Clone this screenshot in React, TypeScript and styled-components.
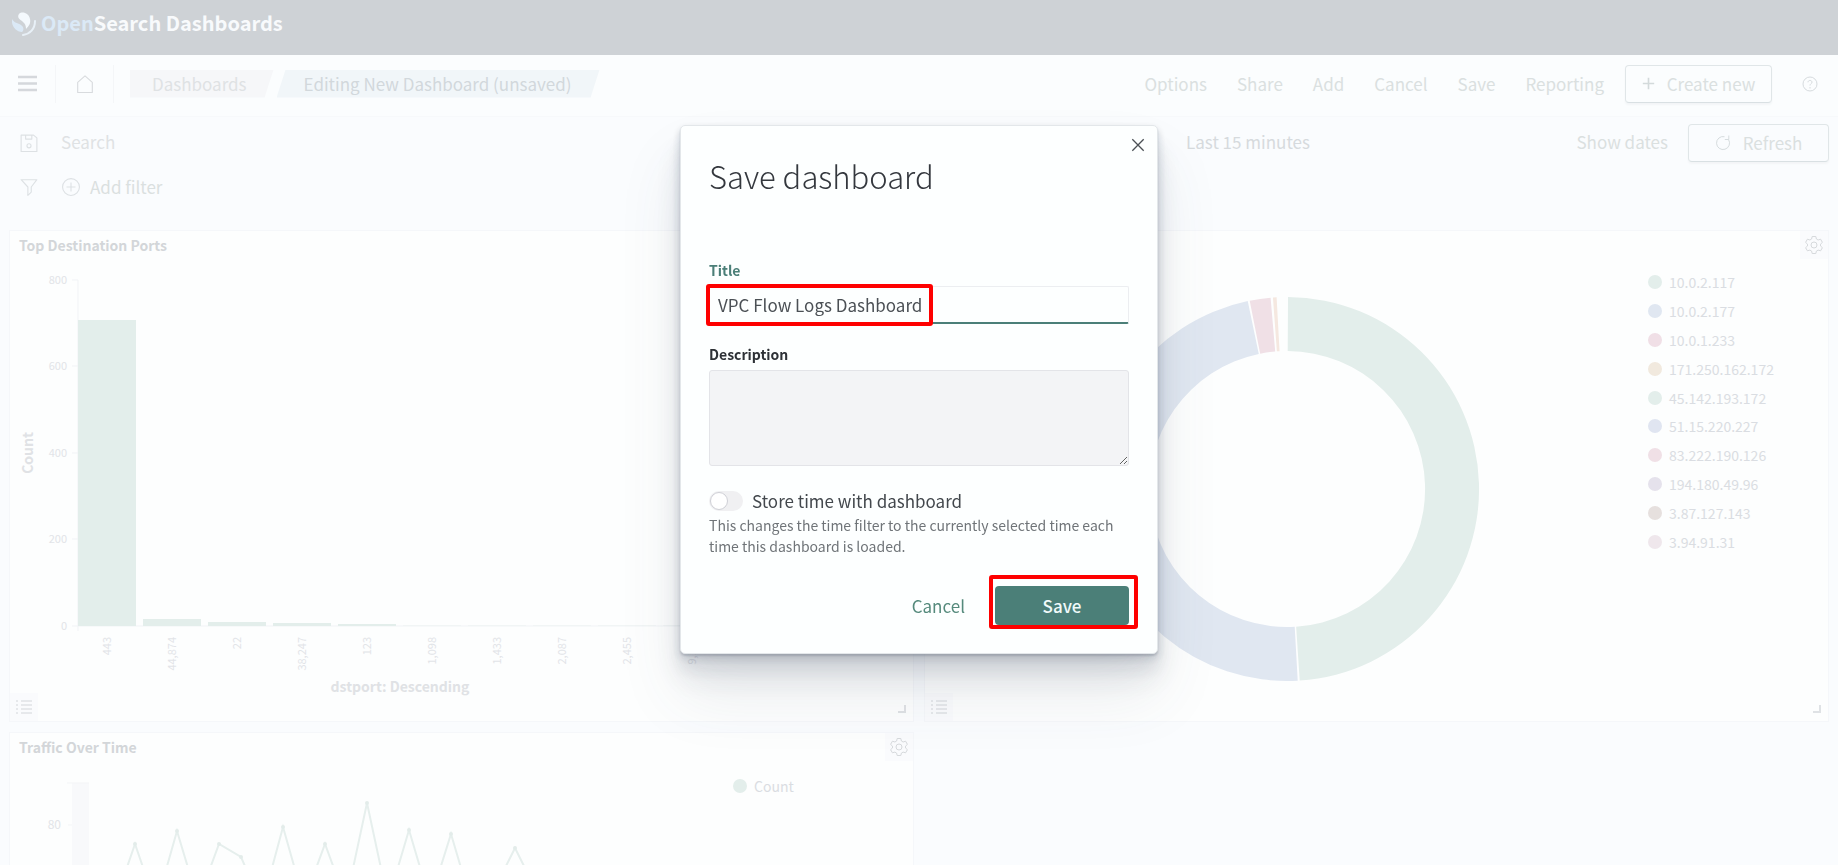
import React, { useState } from "react";
import styled, { createGlobalStyle } from "styled-components";

const Global = createGlobalStyle`
  *, *::before, *::after { box-sizing: border-box; }
  body {
    margin: 0;
    background: #fafcfe;
    font-family: "Noto Sans CJK SC", "Open Sans", sans-serif;
    font-size: 17px;
    line-height: 24px;
    color: #d3d6d9;
  }
  button, input, textarea { font: inherit; color: inherit; }
  button { background: none; border: 0; padding: 0; cursor: pointer; }
`;

const Page = styled.div`
  height: 100vh;
  overflow: hidden;
  display: flex;
  flex-direction: column;
`;

const Header = styled.header`
  flex: none;
  height: 55px;
  padding: 10px 12px;
  background: #ced2d6;
`;
const Brand = styled.a`
  display: inline-flex;
  align-items: center;
  gap: 5px;
  height: 26px;
  color: #f8fafc;
  font-size: 20px;
  font-weight: 700;
  text-decoration: none;
`;
const BrandAccent = styled.span`
  color: #dbe9f6;
`;

const NavBar = styled.nav`
  flex: none;
  display: flex;
  align-items: center;
  height: 62px;
  padding: 0 20px 4px 0;
  border-bottom: 1px solid #f7f9fb;
  background: #fbfdfe;
`;
const NavIcon = styled.button<{ $width: number }>`
  display: flex;
  align-items: center;
  justify-content: center;
  width: ${(p) => p.$width}px;
  height: 38px;
  border-right: 1px solid #f4f6f8;
`;
const Crumbs = styled.ol`
  display: flex;
  gap: 3px;
  margin: 0 auto 0 16px;
  padding: 0;
  list-style: none;
`;
const Crumb = styled.li<{ $current?: boolean }>`
  height: 28px;
  padding: 0 ${(p) => (p.$current ? 28 : 27)}px 0 ${(p) => (p.$current ? 27 : 22)}px;
  line-height: 28px;
  color: ${(p) => (p.$current ? "#d2d8dc" : "#dfe2e4")};
  background: ${(p) => (p.$current ? "#f1f6f9" : "#f6f7f9")};
  clip-path: ${(p) =>
    p.$current
      ? "polygon(9px 0, 100% 0, calc(100% - 9px) 100%, 0 100%)"
      : "polygon(0 0, 100% 0, calc(100% - 9px) 100%, 0 100%)"};
  a { color: inherit; text-decoration: none; }
`;
const Links = styled.div`
  display: flex;
  align-items: center;
  gap: 30px;
  margin-right: 21px;
`;
const TextButton = styled.button`
  color: #dae0e0;
`;
const OutlineButton = styled.button<{ $width: number }>`
  display: flex;
  align-items: center;
  justify-content: center;
  gap: 12px;
  width: ${(p) => p.$width}px;
  height: 38px;
  border: 1px solid #e0e6e8;
  border-bottom-color: #d9e0e3;
  border-radius: 4px;
  color: #dae0e0;
  box-shadow: 0 2px 2px #f3f5f7;
`;
const HelpButton = styled.button`
  display: flex;
  margin-left: 30px;
`;

const QueryBar = styled.div`
  flex: none;
  display: flex;
  align-items: center;
  height: 52px;
  padding: 0 9px 0 20px;
`;
const Search = styled.input`
  flex: 1;
  min-width: 0;
  height: 28px;
  margin-left: 23px;
  padding: 0 0 4px;
  border: 0;
  outline: 0;
  background: none;
  &::placeholder { color: #dfe2e4; opacity: 1; }
`;
const TimeRange = styled.div`
  display: flex;
  align-items: center;
  justify-content: space-between;
  width: 482px;
  height: 28px;
  margin-right: 20px;
  padding-bottom: 2px;
  color: #d6dadd;
`;

const FilterBar = styled.div`
  flex: none;
  display: flex;
  align-items: center;
  gap: 24px;
  height: 36px;
  margin-bottom: 25px;
  padding: 0 20px;
`;
const AddFilter = styled.button`
  display: flex;
  align-items: center;
  gap: 10px;
  color: #dae0e0;
`;

const Grid = styled.main`
  display: grid;
  grid-template-columns: 1fr 1fr;
  grid-auto-rows: 492px;
  gap: 10px;
  padding: 0 9px;
`;
const Panel = styled.section`
  position: relative;
  display: flex;
  flex-direction: column;
  min-width: 0;
  border: 1px solid #f5f7fa;
  background: #fdfefe;
`;
const PanelHead = styled.header`
  display: flex;
  justify-content: space-between;
  height: 32px;
  padding-left: 9px;
`;
const PanelTitle = styled.h2`
  margin: 0;
  color: #d3d6d9;
  font-size: 14px;
  font-weight: 700;
  line-height: 28px;
`;
const CornerButton = styled.button`
  display: flex;
  align-items: center;
  justify-content: center;
  width: 28px;
  height: 28px;
  background: #fafbfd;
`;
const LegendToggle = styled(CornerButton)`
  position: absolute;
  left: 0;
  bottom: 0;
`;
const ResizeGrip = styled.span`
  position: absolute;
  right: 7px;
  bottom: 8px;
  width: 8px;
  height: 8px;
  border: solid #dfe2e5;
  border-width: 0 2px 2px 0;
`;
const PanelBody = styled.div`
  display: flex;
  flex: 1;
  min-height: 0;
`;
const ChartArea = styled.div`
  flex: 1;
  min-width: 0;
`;
const DonutArea = styled.div`
  flex: 1;
  display: flex;
  justify-content: center;
  align-items: flex-start;
  min-width: 0;
  padding-top: 33px;
`;
const Legend = styled.ul<{ $height: number }>`
  flex: none;
  display: flex;
  flex-direction: column;
  width: 180px;
  height: ${(p) => p.$height}px;
  margin: 5px 0 0;
  padding: 0;
  list-style: none;
  font-size: 14px;
`;
const LegendItem = styled.li<{ $color: string }>`
  flex: 1;
  display: flex;
  align-items: center;
  gap: 7px;
  color: #dadde2;
  &::before {
    content: "";
    width: 14px;
    height: 14px;
    border-radius: 50%;
    background: ${(p) => p.$color};
  }
`;

const Overlay = styled.div`
  position: fixed;
  inset: 0;
  display: flex;
  align-items: center;
  justify-content: center;
  padding-bottom: 86px;
`;
const Dialog = styled.form`
  position: relative;
  width: 478px;
  padding: 29px 28px 28px;
  border: 1px solid #e3e7ea;
  border-radius: 5px;
  background: #fdffff;
  color: #4b5055;
  box-shadow:
    0 40px 64px rgba(65, 78, 101, 0.1),
    0 24px 32px rgba(65, 78, 101, 0.1),
    0 16px 16px rgba(65, 78, 101, 0.1),
    0 4px 8px rgba(65, 78, 101, 0.2),
    0 2px 2px rgba(65, 78, 101, 0.2);
`;
const CloseButton = styled.button`
  position: absolute;
  top: 12px;
  right: 12px;
  display: flex;
`;
const DialogTitle = styled.h1`
  margin: 0 0 63px;
  color: #34383e;
  font-size: 31px;
  font-weight: 300;
  line-height: 42px;
`;
const Label = styled.label<{ $focused?: boolean }>`
  display: block;
  color: ${(p) => (p.$focused ? "#4b7f78" : "#2d3136")};
  font-size: 14px;
  font-weight: 700;
  line-height: 20px;
`;
const TitleField = styled.div`
  position: relative;
  margin: 6px 0 20px;
`;
const TitleInput = styled.input`
  display: block;
  width: 100%;
  height: 38px;
  padding: 0 8px;
  border: 1px solid #eceef1;
  border-bottom: 2px solid #4b7f78;
  border-radius: 2px;
  outline: 0;
  background: #fdffff;
`;
const Highlight = styled.span<{ $box: string }>`
  position: absolute;
  inset: ${(p) => p.$box};
  border: 4px solid #fe0000;
  border-radius: 3px;
  pointer-events: none;
`;
const Description = styled.textarea`
  display: block;
  width: 100%;
  height: 96px;
  margin: 6px 0 21px;
  padding: 10px;
  border: 1px solid #e3e4e8;
  border-radius: 3px;
  background: #f3f4f6;
  resize: vertical;
`;
const SwitchRow = styled.label`
  display: flex;
  align-items: center;
  gap: 9px;
  height: 28px;
  color: #43484d;
`;
const Switch = styled.input`
  appearance: none;
  width: 34px;
  height: 20px;
  margin: 0;
  border-radius: 10px;
  background: #f0f0f2;
  &::before {
    content: "";
    display: block;
    width: 18px;
    height: 18px;
    margin: 1px;
    border: 1px solid #cfd0d6;
    border-radius: 50%;
    background: #fff;
  }
  &:checked { background: #4b7f78; }
  &:checked::before { margin-left: 15px; }
`;
const Help = styled.p`
  margin: 0 0 29px;
  color: #6f7478;
  font-size: 14px;
  line-height: 21px;
`;
const Actions = styled.div`
  display: flex;
  align-items: center;
  justify-content: flex-end;
  gap: 30px;
`;
const CancelButton = styled.button`
  color: #558a7c;
`;
const SaveWrap = styled.div`
  position: relative;
`;
const SaveButton = styled.button`
  width: 134px;
  height: 39px;
  border-radius: 4px;
  background: #4b7f78;
  color: #f0fafa;
  font-weight: 500;
`;

const Icon = ({ size = 18, children, stroke = "#dde1e4", view = 16 }: {
  size?: number; children: React.ReactNode; stroke?: string; view?: number;
}) => (
  <svg width={size} height={size} viewBox={`0 0 ${view} ${view}`} fill="none" stroke={stroke} aria-hidden="true">
    {children}
  </svg>
);

const Logo = () => (
  <svg width="24" height="26" viewBox="0 0 24 26" aria-hidden="true">
    <path d="M7 4C10 1 17 3 18 9c1 4-1 7-4 10 0-5-2-6-4-8C7 9 5 7 7 4Z" fill="#f4f9fd" />
    <path d="M0 9c2 4 6 4 9 6 3 2 3 5 1 7C4 22-1 16 0 9Z" fill="#dbe9f6" />
    <path d="M23 11c0 8-5 13-12 14" fill="none" stroke="#e8f0f7" strokeWidth="2" strokeLinecap="round" />
  </svg>
);

const Gear = () => (
  <Icon size={20} stroke="#d6d9dc" view={20}>
    <path d="M8.200 1.500h3.600l.6 2.500 1.700 1 2.500-.8 1.800 3.200-1.900 1.700v1.900l1.900 1.700-1.800 3.100-2.500-.7-1.700 1-.6 2.400H8.200l-.6-2.400-1.700-1-2.500.7-1.800-3.100 1.900-1.700V9.100L1.600 7.400l1.800-3.200 2.500.8 1.700-1z" strokeLinejoin="round" />
    <circle cx="10" cy="10" r="3" />
  </Icon>
);

const ListIcon = () => (
  <Icon size={16} stroke="#d3d6da">
    <path d="M0 2h2M5 2h11M0 6h2M5 6h11M0 10h2M5 10h11M0 14h2M5 14h11" />
  </Icon>
);

const ports = [
  { name: "443", height: 306 },
  { name: "44,874", height: 7 },
  { name: "22", height: 4 },
  { name: "38,247", height: 3 },
  { name: "123", height: 2 },
  { name: "1,098", height: 1 },
  { name: "1,433", height: 1 },
  { name: "2,087", height: 1 },
  { name: "2,455", height: 1 },
  { name: "9,160", height: 1 },
];
const countTicks = [
  { value: 800, y: 17 },
  { value: 600, y: 103 },
  { value: 400, y: 190 },
  { value: 200, y: 276 },
  { value: 0, y: 363 },
];

const PortsChart = () => (
  <svg width="760" height="458" role="img" aria-label="Count by destination port" fontSize="11" fill="#e2e4e8">
    {countTicks.map(({ value, y }) => (
      <g key={value}>
        <text x="57" y={y + 4} textAnchor="end">{value}</text>
        <path d={`M62 ${y}h6`} stroke="#f1f3f6" />
      </g>
    ))}
    <path d="M68 17v351M68 363H720" stroke="#f1f3f6" fill="none" />
    {ports.map((port, i) => (
      <g key={port.name}>
        <rect x={68 + i * 65} y={363 - port.height} width="58" height={port.height} fill={port.height > 1 ? "#e3eeeb" : "#f1f5f5"} />
        <text transform={`translate(${101 + i * 65} 374) rotate(-90)`} textAnchor="end">{port.name}</text>
      </g>
    ))}
    <g fontSize="14" fontWeight="700" fill="#e0e2e5" textAnchor="middle">
      <text transform="translate(23 190) rotate(-90)">Count</text>
      <text x="390" y="429">dstport: Descending</text>
    </g>
  </svg>
);

const at = (radius: number, degrees: number) => {
  const a = (degrees * Math.PI) / 180;
  return `${(193 + radius * Math.sin(a)).toFixed(2)} ${(193 - radius * Math.cos(a)).toFixed(2)}`;
};
const ring = (from: number, to: number) => {
  const large = to - from > 180 ? 1 : 0;
  return `M${at(192, from)}A192 192 0 ${large} 1 ${at(192, to)}L${at(138, to)}A138 138 0 ${large} 0 ${at(138, from)}Z`;
};
const slices = [
  { from: 0.3, to: 176.2, color: "#e3eeeb" },
  { from: 176.8, to: 348.2, color: "#e0e7f1" },
  { from: 348.8, to: 355.1, color: "#f0e0e6" },
  { from: 355.8, to: 356.9, color: "#f5e8e0" },
];
const Donut = () => (
  <svg width="386" height="386" role="img" aria-label="Traffic by address">
    {slices.map((s) => (
      <path key={s.color} d={ring(s.from, s.to)} fill={s.color} />
    ))}
  </svg>
);

const addresses = [
  ["10.0.2.117", "#e3eeeb"],
  ["10.0.2.177", "#e0e7f1"],
  ["10.0.1.233", "#f0dfe6"],
  ["171.250.162.172", "#f1e9de"],
  ["45.142.193.172", "#e3eeeb"],
  ["51.15.220.227", "#e0e5f1"],
  ["83.222.190.126", "#f0e0e6"],
  ["194.180.49.96", "#e5e2ec"],
  ["3.87.127.143", "#e6e0de"],
  ["3.94.91.31", "#efe7ec"],
];

const samples = [
  [104, 140], [125, 79], [146, 140], [167, 66], [188, 136], [209, 79], [231, 92], [252, 140],
  [273, 62], [294, 136], [315, 79], [336, 136], [357, 38], [378, 136], [399, 65], [420, 136],
  [441, 69], [462, 140], [484, 125], [505, 83], [526, 125],
];
const TrafficChart = () => (
  <svg width="600" height="458" role="img" aria-label="Count over time" fontSize="12" fill="#e2e4e8">
    <rect x="62" y="18" width="17" height="440" fill="#f8f9fb" />
    <path d="M57 18h22M58 60h4" stroke="#f3f5f7" />
    <text x="51" y="64" textAnchor="end">80</text>
    <polyline points={samples.map((p) => p.join(",")).join(" ")} fill="none" stroke="#e6efed" strokeWidth="2" />
    {samples.map(([x, y]) => (
      <circle key={x} cx={x} cy={y} r="2" fill="#e3ecea" />
    ))}
  </svg>
);

export default function App() {
  const [title, setTitle] = useState("VPC Flow Logs Dashboard");
  return (
    <>
      <Global />
      <Page>
        <Header>
          <Brand href="#">
            <Logo />
            <span><BrandAccent>Open</BrandAccent>Search Dashboards</span>
          </Brand>
        </Header>

        <NavBar>
          <NavIcon $width={56} aria-label="Menu">
            <Icon size={19} stroke="#d5d8dc">
              <path d="M0 2.500h16M0 8h16M0 13.500h16" strokeWidth="2" />
            </Icon>
          </NavIcon>
          <NavIcon $width={58} aria-label="Home">
            <Icon stroke="#d8dbde">
              <path d="M1.500 6.500 8 .8l6.500 5.700v9h-13z" strokeLinejoin="round" />
            </Icon>
          </NavIcon>
          <Crumbs>
            <Crumb><a href="#">Dashboards</a></Crumb>
            <Crumb $current>Editing New Dashboard (unsaved)</Crumb>
          </Crumbs>
          <Links>
            {["Options", "Share", "Add", "Cancel", "Save", "Reporting"].map((name) => (
              <TextButton key={name}>{name}</TextButton>
            ))}
          </Links>
          <OutlineButton $width={147}>
            <Icon size={13} stroke="#d3dadb"><path d="M8 1v14M1 8h14" strokeWidth="2" /></Icon>
            Create new
          </OutlineButton>
          <HelpButton aria-label="Help">
            <Icon size={16} stroke="#d6dbde">
              <circle cx="8" cy="8" r="7" />
              <path d="M6 6.300C6 3.800 10 3.900 10 6.200 10 7.600 8 7.700 8 9.500M8 11v1.500" />
            </Icon>
          </HelpButton>
        </NavBar>

        <QueryBar>
          <Icon>
            <path d="M1 1h11l3 2.500V15.500H1zM5 1v3.500h5.500V1" strokeLinejoin="round" />
            <circle cx="8" cy="10.500" r="1.800" />
          </Icon>
          <Search placeholder="Search" aria-label="Search" />
          <TimeRange>
            <span>Last 15 minutes</span>
            <TextButton>Show dates</TextButton>
          </TimeRange>
          <OutlineButton $width={141}>
            <Icon size={16} stroke="#d6dcde">
              <path d="M13.500 4.500A6.500 6.500 0 1 1 9.500 1.700M13.800 .5v4h-4" />
            </Icon>
            Refresh
          </OutlineButton>
        </QueryBar>

        <FilterBar>
          <Icon><path d="M1 1.500h14L10 8v4.500L7 15.500V8z" strokeLinejoin="round" /></Icon>
          <AddFilter>
            <Icon><circle cx="8" cy="8" r="7.500" /><path d="M8 4v8M4 8h8" /></Icon>
            Add filter
          </AddFilter>
        </FilterBar>

        <Grid>
          <Panel>
            <PanelHead><PanelTitle>Top Destination Ports</PanelTitle></PanelHead>
            <PanelBody><ChartArea><PortsChart /></ChartArea></PanelBody>
            <LegendToggle aria-label="Toggle legend"><ListIcon /></LegendToggle>
            <ResizeGrip />
          </Panel>
          <Panel>
            <PanelHead>
              <PanelTitle />
              <CornerButton aria-label="Panel options"><Gear /></CornerButton>
            </PanelHead>
            <PanelBody>
              <DonutArea><Donut /></DonutArea>
              <Legend $height={288}>
                {addresses.map(([name, color]) => (
                  <LegendItem key={name} $color={color}>{name}</LegendItem>
                ))}
              </Legend>
            </PanelBody>
            <LegendToggle aria-label="Toggle legend"><ListIcon /></LegendToggle>
            <ResizeGrip />
          </Panel>
          <Panel>
            <PanelHead>
              <PanelTitle>Traffic Over Time</PanelTitle>
              <CornerButton aria-label="Panel options"><Gear /></CornerButton>
            </PanelHead>
            <PanelBody>
              <ChartArea><TrafficChart /></ChartArea>
              <Legend $height={32}>
                <LegendItem $color="#e3eeeb">Count</LegendItem>
              </Legend>
            </PanelBody>
          </Panel>
        </Grid>
      </Page>

      <Overlay>
        <Dialog role="dialog" aria-labelledby="dialog-title" onSubmit={(e) => e.preventDefault()}>
          <CloseButton type="button" aria-label="Close">
            <Icon size={14} stroke="#4b5055"><path d="M1.500 1.500l13 13M14.500 1.500l-13 13" strokeWidth="1.500" /></Icon>
          </CloseButton>
          <DialogTitle id="dialog-title">Save dashboard</DialogTitle>
          <Label htmlFor="title" $focused>Title</Label>
          <TitleField>
            <TitleInput id="title" value={title} onChange={(e) => setTitle(e.target.value)} />
            <Highlight $box="-2px 196px -2px -3px" />
          </TitleField>
          <Label htmlFor="description">Description</Label>
          <Description id="description" />
          <SwitchRow>
            <Switch type="checkbox" role="switch" />
            Store time with dashboard
          </SwitchRow>
          <Help>This changes the time filter to the currently selected time each time this dashboard is loaded.</Help>
          <Actions>
            <CancelButton type="button">Cancel</CancelButton>
            <SaveWrap>
              <SaveButton type="submit">Save</SaveButton>
              <Highlight $box="-11px -9px -4px -6px" />
            </SaveWrap>
          </Actions>
        </Dialog>
      </Overlay>
    </>
  );
}
